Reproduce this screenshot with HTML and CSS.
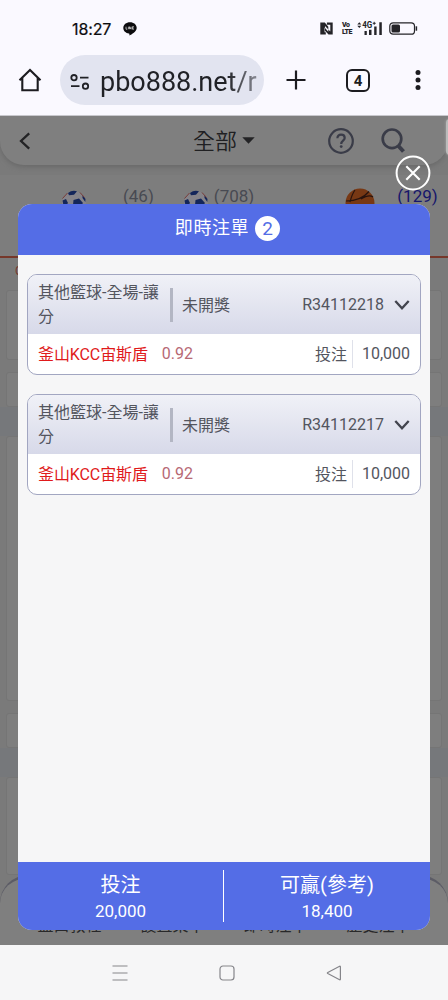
FILE: index.html
```html
<!DOCTYPE html>
<html lang="zh-Hant">
<head>
<meta charset="utf-8">
<title>即時注單</title>
<link rel="stylesheet" href="styles.css">
</head>
<body>
<div class="phone">
  <header class="chrome">
    <div class="status">
      <span class="clock">18:27</span>
      <svg class="line" width="14" height="14" viewBox="0 0 14 14"><path d="M7 .3C3.200.3.300 2.700.3 5.900c0 2.900 2.500 5.100 5.600 5.600.8.200.5 1 .5 1.900 2.200-1.100 7.300-3.800 7.300-7.500C13.700 2.700 10.800.3 7 .3z" fill="#0c0c0e"/><path d="M3 4.700v2.500h1.300M5.400 4.700v2.500M6.500 7.200V4.700l1.500 2.500V4.700M10.900 4.700H9.400v2.500h1.500M9.400 6h1.300" fill="none" stroke="#ddd" stroke-width=".75"/></svg>
      <div class="signals">
        <svg class="nfc" width="13" height="13" viewBox="0 0 13 13"><path d="M.3.500h4.500l3.500 4.200v5L4.600 5.500v4.700h1.200v2.300H.3zM6.900.500h5.800v12H8.500L5 8.700V4l5.300 5.500V2.800H6.900z" fill="#242428" fill-rule="evenodd"/></svg>
        <span class="volte"><b>Vo</b><b>LTE</b></span>
        <svg class="bars" width="26" height="15" viewBox="0 0 26 15"><path d="M.3 3.500L2.300 1.200l2 2.300zM.3 4.800L2.300 7l2-2.200zM7.500 10h2.300v4H7.500zM12 8.700h2.500V14H12zM17.200 5.500h2.400V14h-2.400zM22.300 1.300h2.500V14h-2.500z" fill="#242428"/><text x="5.300" y="7.400" font-size="8.500" font-weight="bold" fill="#242428" textLength="10" lengthAdjust="spacingAndGlyphs">4G</text><path d="M15.700 2.300h3M17.200.8v3" stroke="#242428"/></svg>
        <svg class="battery" width="29" height="13" viewBox="0 0 29 13"><rect x=".8" y=".8" width="24.700" height="11.400" rx="3.300" fill="none" stroke="#242428" stroke-width="1.200"/><rect x="2.500" y="2.400" width="8.500" height="8.200" rx="1.500" fill="#242428"/><path d="M27.400 4.300v4.400" stroke="#242428" stroke-width="1.500"/></svg>
      </div>
    </div>
    <div class="toolbar">
      <svg class="home" width="24" height="24" viewBox="0 0 24 24"><path d="M1.500 12.300L12 2l10.500 10.300M4.300 10v12.200h15.400V10" fill="none" stroke="#1c1c20" stroke-width="2.100"/></svg>
      <div class="url">
        <svg width="20" height="18" viewBox="0 0 20 18"><g fill="none" stroke="#202126" stroke-width="1.800"><circle cx="4" cy="4.700" r="2.700"/><path d="M10 4.700h8.500M1 13.200h8.500"/><circle cx="15.500" cy="13.200" r="2.700"/></g></svg>
        <span>pbo888.net/r</span>
      </div>
      <svg class="plus" width="20" height="20" viewBox="0 0 20 20"><path d="M10 .5v19M.5 10h19" stroke="#1c1c20" stroke-width="2.200"/></svg>
      <span class="tabs">4</span>
      <svg class="dots" width="6" height="22" viewBox="0 0 6 22"><g fill="#1c1c20"><circle cx="3" cy="3.600" r="2.500"/><circle cx="3" cy="11" r="2.500"/><circle cx="3" cy="18.400" r="2.500"/></g></svg>
    </div>
  </header>

  <main class="view">
    <div class="page">
      <div class="appbar">
        <svg class="back" width="12" height="18" viewBox="0 0 12 18"><path d="M10.200 1.300L2 9l8.200 7.700" fill="none" stroke="#232325" stroke-width="2.300"/></svg>
        <span class="all">全部</span>
        <svg class="caret" width="13" height="7" viewBox="0 0 13 7"><path d="M.3.300h12.400L6.500 6.800z" fill="#232325"/></svg>
        <svg class="help" width="26" height="26" viewBox="0 0 26 26"><circle cx="13" cy="13" r="11.800" fill="none" stroke="#3a3c48" stroke-width="2.200"/><path d="M9.400 10.300c0-2.300 1.500-3.600 3.700-3.600 2.100 0 3.600 1.300 3.600 3.200 0 2.700-3.500 2.800-3.500 6" fill="none" stroke="#3a3c48" stroke-width="2.200"/><circle cx="13.200" cy="18.600" r="1.400" fill="#3a3c48"/></svg>
        <svg class="search" width="26" height="26" viewBox="0 0 26 26"><circle cx="12" cy="10.800" r="9.300" fill="none" stroke="#3a3c48" stroke-width="2.700"/><path d="M18 17.500l5.500 6" stroke="#3a3c48" stroke-width="4"/></svg>
      </div>
      <div class="sports">
        <div class="sport s1"><svg class="ball" width="26" height="26" viewBox="0 0 26 26"><use href="#soccer"/></svg><span>(46)</span></div>
        <div class="sport s2"><svg class="ball" width="26" height="26" viewBox="0 0 26 26"><g id="soccer"><circle cx="13" cy="13" r="12" fill="#858389"/><path d="M7 3Q11-.2 16 1.300L13 4.700 8 5.300zM1.500 10.500l3.500-1.500 2 4-4 5zM12.500 10l5.500-1.500 4 4.500-4 5-6-3zM21.500 5l3 4-.2 3-2.800-4z" fill="#14265a"/><path d="M1.500 8.500L6.500 3M19 2.500l4.500 5" stroke="#763b36"/></g></svg><span>(708)</span></div>
        <div class="sport s3"><svg class="ball" width="30" height="30" viewBox="0 0 30 30"><circle cx="15" cy="15" r="14.500" fill="#773814"/><path d="M1 13Q16 13 24 3.500M10 2Q7 6 5 14M16 11Q24 6 28 9" fill="none" stroke="#28130e" stroke-width="1.200"/></svg><span class="active">(129)</span></div>
      </div>
      <div class="subrow">C</div>
      <div class="panel first"></div>
      <div class="panel row"></div>
      <div class="band"></div>
      <div class="panel tall"></div>
      <div class="panel row"></div>
      <div class="band"></div>
      <div class="panel last"></div>
      <nav class="tabbar"><span>盤口教程</span><span>設置菜單</span><span>即時注單</span><span>歷史注單</span></nav>
    </div>

    <section class="modal">
      <h1>即時注單<span class="count">2</span></h1>
      <div class="list">
        <article class="bet">
          <div class="bet-head">
            <span class="kind">其他籃球-全場-讓分</span><i class="bar"></i><span class="state">未開獎</span><span class="id">R34112218</span>
            <svg width="16" height="12" viewBox="0 0 16 12"><path d="M1.300 2L8 9.200 14.700 2" fill="none" stroke="#43454f" stroke-width="2.300"/></svg>
          </div>
          <div class="bet-body"><span class="team">釜山KCC宙斯盾</span><span class="odds">0.92</span><span class="label">投注</span><span class="amount">10,000</span></div>
        </article>
        <article class="bet">
          <div class="bet-head">
            <span class="kind">其他籃球-全場-讓分</span><i class="bar"></i><span class="state">未開獎</span><span class="id">R34112217</span>
            <svg width="16" height="12" viewBox="0 0 16 12"><path d="M1.300 2L8 9.200 14.700 2" fill="none" stroke="#43454f" stroke-width="2.300"/></svg>
          </div>
          <div class="bet-body"><span class="team">釜山KCC宙斯盾</span><span class="odds">0.92</span><span class="label">投注</span><span class="amount">10,000</span></div>
        </article>
      </div>
      <footer class="totals">
        <div><span class="name">投注</span><span class="sum">20,000</span></div>
        <div><span class="name">可贏(參考)</span><span class="sum">18,400</span></div>
      </footer>
    </section>
    <svg class="close" width="36" height="36" viewBox="0 0 36 36"><circle cx="18" cy="18" r="16.400" fill="none" stroke="#fff" stroke-width="2"/><path d="M11.300 11.300l13.400 13.400M24.700 11.300L11.300 24.700" stroke="#fff" stroke-width="2.100"/></svg>
    <i class="edge"></i>
  </main>

  <div class="navbar">
    <svg width="16" height="16" viewBox="0 0 16 16"><path d="M.5 1h15M.5 8h15M.5 15h15" stroke="#85858a" stroke-width="1.200"/></svg>
    <svg width="16" height="16" viewBox="0 0 16 16"><rect x="1" y="1" width="14" height="14" rx="3" fill="none" stroke="#85858a" stroke-width="1.200"/></svg>
    <svg width="16" height="16" viewBox="0 0 16 16"><path d="M14.400 1.800v12.400q0 .8-.8.500L1.800 8.600q-1-.6 0-1.200l11.800-6.100q.8-.300.8.500z" fill="none" stroke="#85858a" stroke-width="1.200"/></svg>
  </div>
</div>
</body>
</html>
```
FILE: styles.css
```css
* { box-sizing: border-box; }
body { margin: 0; font-family: Roboto, "Noto Sans CJK TC", sans-serif; color: #53555e; }
svg { display: block; flex: none; }
.phone { width: 448px; height: 1000px; display: flex; flex-direction: column; overflow: hidden; }

.chrome { height: 116px; flex: none; background: #faf9ff; border-bottom: 1px solid #c8c8cd; }
.status { height: 55px; padding: 2px 30px 0 72px; display: flex; align-items: center; color: #0c0c0e; }
.clock { font: 400 16px/20px Inter, sans-serif; letter-spacing: -0.1px; width: 51px; -webkit-text-stroke: .2px; }
.signals { margin-left: auto; display: flex; align-items: center; }
.nfc { margin-right: 8px; }
.volte { width: 16px; font: 700 7px/6.500px Roboto, sans-serif; color: #242428; display: flex; flex-direction: column; align-items: flex-start; }
.volte b { margin-left: 1px; letter-spacing: -.5px; }
.bars { font-family: Roboto, sans-serif; margin-top: -1px; margin-right: 6px; }
.toolbar { height: 50px; display: flex; align-items: center; padding: 0 27px 0 18px; }
.home { margin-right: 18px; }
.url { width: 204px; height: 50px; border-radius: 25px; background: #e2e4f0; display: flex; align-items: center; padding: 3px 6px 0 10px; gap: 10px; }
.url span { width: 158px; white-space: nowrap; font-size: 27px; line-height: 36px; background: linear-gradient(90deg, #202126 80%, #8b8d96); background-clip: text; color: transparent; }
.plus { margin: 0 40px 0 22px; }
.tabs { width: 24px; height: 23px; border: 2px solid #1c1c20; border-radius: 6px; font-size: 15px; font-weight: 700; line-height: 20px; text-align: center; color: #1c1c20; }
.dots { margin-left: auto; }

.view { position: relative; height: 829px; flex: none; background: #7a7a7a; overflow: hidden; }
.page { height: 829px; display: flex; flex-direction: column; }
.appbar { height: 49px; flex: none; background: #7f7f7f; border-radius: 0 0 24px 24px; box-shadow: 0 2px 5px #696969; display: flex; align-items: center; padding: 0 42px 0 19px; }
.all { margin-left: 162px; margin-top: -4px; font-size: 22px; line-height: 30px; font-weight: 350; color: #202022; font-family: "Noto Sans CJK TC", sans-serif; }
.caret { margin-left: 5px; margin-right: 73px; }
.search { margin-left: auto; }
.sports { height: 83px; margin-top: 10px; flex: none; background: #7d7d7d; border-bottom: 2px solid #76372a; display: flex; align-items: flex-start; padding-top: 9px; font-size: 17px; line-height: 24px; color: #484a52; }
.sport { display: flex; align-items: flex-start; }
.ball { margin-top: 6px; }
.s1 { margin-left: 61px; gap: 36px; }
.s2 { margin-left: 29px; gap: 5px; }
.s3 { margin-left: 91px; gap: 22px; }
.s3 .ball { margin-top: 4px; }
.active { color: #15156b; }
.subrow { height: 32px; flex: none; padding: 3px 15px; font-size: 12px; line-height: 20px; color: #74382e; background: #7a7a7a; }
.panel { flex: none; margin: 0 6px; background: #7e7e7e; border: 1px solid #757575; border-radius: 3px; }
.first { height: 70px; margin-bottom: 12px; }
.row { height: 35px; }
.band { height: 29px; flex: none; background: #76787b; }
.tall { height: 265px; margin-bottom: 12px; }
.last { height: 98px; }
.tabbar { height: 70px; flex: none; background: #7f7f7f; border-top: 3px solid #5c5c66; border-radius: 28px 28px 0 0; display: flex; justify-content: space-around; padding: 36px 18px 0; font-size: 16px; line-height: 24px; color: #28282a; }

.modal { position: absolute; left: 18px; top: 88px; width: 412px; height: 726px; border-radius: 14px; overflow: hidden; background: #f6f6f7; display: flex; flex-direction: column; }
.modal h1 { margin: 0; height: 51px; flex: none; background: #546de6; color: #fff; font-size: 18px; line-height: 26px; font-weight: 400; display: flex; align-items: center; justify-content: center; gap: 6px; letter-spacing: .6px; padding: 0 0 3px 7px; }
.count { width: 25px; height: 25px; border-radius: 50%; background: #fff; color: #546de6; font-size: 19px; line-height: 26px; text-align: center; letter-spacing: 0; }
.list { flex: 1; padding: 19px 9px; display: flex; flex-direction: column; gap: 19px; }
.bet { height: 101px; border: 1.500px solid #a2a6c1; border-radius: 10px; overflow: hidden; background: #fff; font-size: 16px; flex: none; }
.bet-head { height: 59px; background: linear-gradient(#f0f1f7, #d7d9e9); display: flex; align-items: center; padding: 0 10px; }
.kind { width: 125px; line-height: 24px; }
.bar { width: 3px; height: 34px; background: #b3b6c3; margin-left: 7px; margin-right: 9px; }
.state { margin-top: -2px; }
.id { margin-left: auto; margin-right: 10px; }
.bet-body { height: 39px; display: flex; align-items: center; padding: 0 10px; }
.team { color: #e01a1b; margin-top: -2px; letter-spacing: -.1px; }
.odds { color: #b76975; margin-left: 14px; margin-top: -1px; }
.label { margin-left: auto; margin-top: -2px; }
.amount { border-left: 1px solid #dfe1ea; margin-left: 5px; padding-left: 9px; height: 28px; line-height: 28px; }
.totals { height: 68px; flex: none; background: #546de6; color: #fff; display: flex; padding: 8px 0; }
.totals div { width: 205px; display: flex; flex-direction: column; align-items: center; padding-top: 1px; }
.totals div + div { width: 207px; border-left: 1px solid #fff; }
.name { font-size: 20px; line-height: 29px; }
.sum { font-size: 17px; line-height: 23px; }
.close { position: absolute; left: 395px; top: 39px; }
.edge { position: absolute; left: 446px; top: 3px; width: 8px; height: 36px; border-radius: 4px; background: #bbb; box-shadow: 0 0 3px #aaa; }

.navbar { height: 55px; flex: none; background: #f6f6f7; display: flex; align-items: center; gap: 91px; padding-left: 112px; }
```
